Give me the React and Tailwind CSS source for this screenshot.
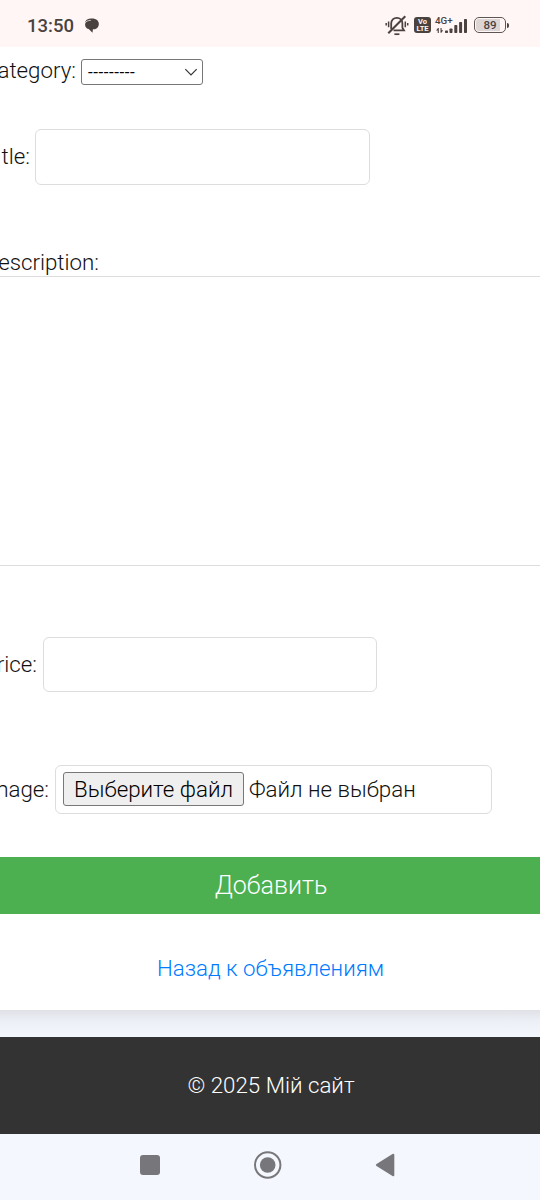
import React from "react";

function MutedBell() {
  return (
    <svg className="h-[22px] w-[24px]" viewBox="0 0 24 22" fill="none" stroke="#49423f" strokeWidth="1.8">
      <path d="M6.2 15.3V9.6C6.2 6 8.6 3.8 11.8 3.8S17.4 6 17.4 9.6v4.2l1.6 2.6H8.5" />
      <path d="M3.3 19.3L20.3 2.3" strokeWidth="2" />
      <path d="M9.4 20.2h5" strokeWidth="1.7" />
      <path d="M3.6 7.6v5.6M1.2 9v2.6M20.3 7.6v5.6M22.7 9v2.6" strokeWidth="1.5" />
    </svg>
  );
}

function VoLte() {
  return (
    <span className="flex h-[16px] w-[17px] flex-col items-center justify-center rounded-[3px] bg-[#49423f] text-[7.5px] leading-[7px] font-bold text-[#fff5f4]">
      <span>Vo</span>
      <span>LTE</span>
    </span>
  );
}

function Signal() {
  return (
    <span className="-mt-px flex h-[18px] w-[34px] flex-col">
      <span className="h-[9px] text-[9.8px] leading-[9px] font-medium whitespace-nowrap">4G+</span>
      <svg className="-mt-[7px] h-[16px] w-[34px] shrink-0" viewBox="0 0 34 16" fill="#49423f">
        <path d="M1 12.4l2-2.5h.8V15H2.7v-2.6zM8.2 12.2l-1.8 2.6h-.9V10h1.1v2.2z" />
        <rect x="10" y="12.5" width="3" height="2.5" rx=".7" />
        <rect x="14.5" y="10.5" width="3" height="4.5" rx=".7" />
        <rect x="19.3" y="7" width="3" height="8" rx=".7" />
        <rect x="24.1" y="4" width="3" height="11" rx=".7" />
        <rect x="29" y="1" width="3" height="14" rx=".7" />
      </svg>
    </span>
  );
}

function Battery() {
  return (
    <span className="flex items-center gap-px">
      <span className="flex h-[16px] w-[32px] items-center justify-center rounded-[5px] border-[1.5px] border-[#5d5653] p-px">
        <span className="h-full w-full rounded-[3px] bg-[linear-gradient(90deg,#ddd5d4_86%,transparent_86%)] text-center text-[11.5px] leading-[13px] font-medium">89</span>
      </span>
      <span className="h-[5px] w-[2px] rounded-r-sm bg-[#49423f]" />
    </span>
  );
}

function StatusBar() {
  return (
    <header className="flex h-[47px] items-center bg-[#fff6f5] pt-[3px] pr-[31px] pl-[27px] text-[#49423f]">
      <time className="mt-px w-[57px] text-[18.5px] leading-6 font-medium">13:50</time>
      <svg className="mt-px h-4 w-4" viewBox="0 0 16 16" fill="#49423f">
        <path d="M3.2 1.6C5.6.2 11.2.1 13.3 2.2c2.3 2.2 1.9 6.3-.4 8-1.2.9-2.7 1.1-4 1.1l-.4 3.5-3.8-3.7C2.1 10.3 1 8.7 1.1 6.2 1.1 4 1.6 2.6 3.2 1.6z" />
        <path d="M1.1 5.4C1.7 3.2 4 2.4 6.8 2.4" fill="none" stroke="#fff6f5" strokeWidth=".7" />
      </svg>
      <div className="ml-auto flex items-center">
        <span className="-mt-px"><MutedBell /></span>
        <span className="ml-[5px]"><VoLte /></span>
        <span className="ml-[4px]"><Signal /></span>
        <span className="ml-[5px]"><Battery /></span>
      </div>
    </header>
  );
}

function Label({ className, children }) {
  return (
    <label className={`flex shrink-0 justify-end overflow-hidden leading-[28px] whitespace-nowrap ${className}`}>
      {children}
    </label>
  );
}

function NavigationBar() {
  return (
    <nav className="flex h-[66px] items-center bg-[#f4f7fd] pb-1 pl-[139px]">
      <svg className="h-[28px] w-[260px]" viewBox="0 0 260 28" fill="#77777b">
        <rect x="1" y="4" width="20" height="20" rx="3" />
        <circle cx="128.7" cy="14" r="12.7" fill="none" stroke="#77777b" strokeWidth="2" />
        <circle cx="128.7" cy="14" r="7.8" />
        <path d="M237.5 13.1l16-10q1.8-.8 1.8 1v20q0 1.8-1.8 1l-16-10q-1.5-1 0-2z" />
      </svg>
    </nav>
  );
}

export default function App() {
  return (
    <div className="flex h-[1200px] w-[540px] flex-col overflow-hidden bg-white font-[Roboto,sans-serif] text-[22.3px] font-light text-[#111]">
      <StatusBar />
      <main className="h-[963px] shrink-0 overflow-hidden bg-white">
        <div className="flex h-[81px] items-start pt-[12px]">
          <Label className="-mt-[3px] mr-[5px] w-[76px]">Category:</Label>
          <button className="flex h-[26px] w-[122px] items-center justify-between rounded-[3px] border border-[#777] pr-[4px] pl-[6px] text-[17px] leading-none font-normal text-black">
            <span className="tracking-[0.55px]">---------</span>
            <svg className="h-[10px] w-[14px]" viewBox="0 0 14 10" fill="none" stroke="#333" strokeWidth="1.2">
              <path d="M1.3 2.2L7 8l5.7-5.8" />
            </svg>
          </button>
        </div>
        <div className="flex h-[121px] items-start">
          <Label className="mt-[14px] mr-[5px] ml-px w-[29px]">Title:</Label>
          <input className="mt-[1px] h-[56px] w-[335px] rounded-[6px] border border-[#ddd]" />
        </div>
        <div className="flow-root h-[388px]">
          <Label className="-mt-px h-[28px] w-[99px]">Description:</Label>
          <textarea className="-mx-[10px] block h-[290px] w-[560px] resize-none border border-[#ddd]" />
        </div>
        <div className="flex h-[128px] items-start">
          <Label className="mt-[13px] mr-[6px] w-[37px]">Price:</Label>
          <input className="h-[55px] w-[334px] rounded-[6px] border border-[#ddd]" />
        </div>
        <div className="flex h-[92px] items-start">
          <Label className="mt-[10px] mr-[6px] w-[49px]">Image:</Label>
          <div className="flex h-[49px] w-[437px] items-center rounded-[6px] border border-[#ddd] pl-[7px]">
            <button className="-mt-px h-[34px] w-[181px] rounded-[3px] border border-[#777] bg-[#efefef] text-center leading-[33px] whitespace-nowrap text-black">Выберите файл</button>
            <span className="ml-[5px] whitespace-nowrap">Файл не выбран</span>
          </div>
        </div>
        <button className="block h-[57px] w-full bg-[#4caf50] pl-[2px] text-[25px] leading-[57px] text-white">Добавить</button>
        <div className="flex h-[96px] items-center justify-center pt-[14px] pl-px">
          <a className="text-[#007bff]">Назад к объявлениям</a>
        </div>
      </main>
      <div className="h-[27px] shrink-0 bg-linear-to-b from-[#dfe1e7] via-[#eceff5] via-40% to-[#f4f7fd]" />
      <footer className="flex h-[97px] shrink-0 items-center justify-center bg-[#333] pl-[2px] text-white">© 2025 Мій сайт</footer>
      <NavigationBar />
    </div>
  );
}
